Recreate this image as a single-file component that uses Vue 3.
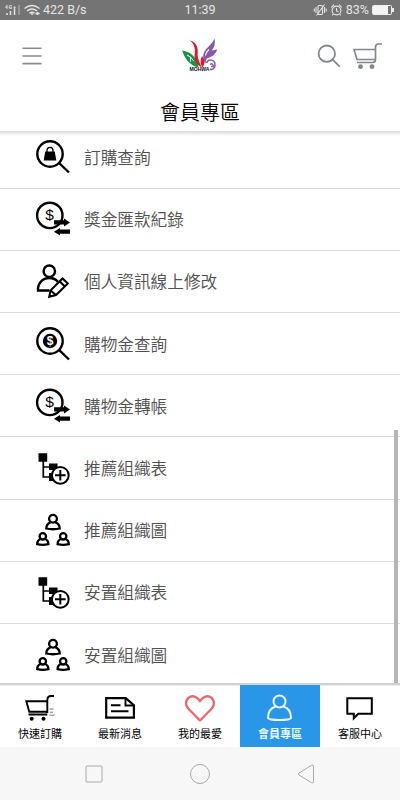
<template>
  <div class="screen">
    <div class="status-bar">
      <div class="status-left">
        <svg width="44" height="20" viewBox="0 0 44 20" fill="none" stroke="#e4e4e4">
          <path d="M7 15v-2M10.500 15v-4M14.500 15V8.500" stroke-width="1.500" />
          <path d="M19 15V5" stroke="#bdbdbd" stroke-width="1" />
          <text x="5" y="8.500" class="net" textLength="11">4G+</text>
          <path d="M24.500 8.500q7.500-6 15 0M27 11q5-4 10 0M29.500 13.300q2.500-2 5 0" stroke-width="1.500" />
          <circle cx="32" cy="14" r="1" fill="#e4e4e4" stroke="none" />
          <path d="M35.500 13.500h4M37.500 12v3" stroke-width="1.600" />
        </svg>
        <span class="speed">422 B/s</span>
      </div>
      <span>11:39</span>
      <div class="status-right">
        <svg width="32" height="20" viewBox="0 0 32 20" fill="none" stroke="#e4e4e4" stroke-width="1.100">
          <rect x="5" y="5.500" width="4.500" height="9" rx="1" />
          <path d="M3 7v6M1.300 8.500v3M11.500 7v6M13.200 8.500v3M3.500 15.500l8-11" />
          <circle cx="23.500" cy="10.500" r="4.400" />
          <path d="M23.500 8v3l2 .8M18.300 7.300l2.800-2.600M28.700 7.300l-2.800-2.600M20.300 14l-1 1.400M26.700 14l1 1.400" />
        </svg>
        <span class="percent">83%</span>
        <svg width="23" height="20" viewBox="0 0 23 20">
          <rect x=".5" y="5.500" width="19" height="9" rx="1" fill="none" stroke="#eee" />
          <path d="M1 6h15v8H1z" fill="#f4f4f4" />
          <path d="M20 8h2v4h-2z" fill="#eee" />
        </svg>
      </div>
    </div>

    <header class="top-bar">
      <svg width="20" height="20" viewBox="0 0 20 20" stroke="#858a8f" stroke-width="1.600">
        <path d="M.5 2.300h19M.5 10h19M.5 17.600h19" />
      </svg>
      <svg class="logo" width="40" height="38" viewBox="0 0 40 38">
        <path d="M2.200 13.400C9 14.500 16.500 18 18.600 30.500 9 28 4.500 21 2.200 13.400Z" fill="#169447" />
        <path d="M7 18q5 2 6.500 6M10.500 20v4.500" stroke="#fff" stroke-width="1" fill="none" />
        <path d="M9.800 3.200C17 5.500 18.200 11 17.700 16c-.4 5.500 2 9 4 14.500-5.500-3-8-7-6.900-14C15.500 10.500 13.500 6 9.800 3.200Z" fill="#d51d2b" />
        <path d="M22 19c3.500 4 3 8 .3 11.500-2.300-4-2.300-7.500-.3-11.500Z" fill="#d51d2b" />
        <path d="M34.600 1.500c.8 5.500-.2 9-3 12l5.700-1c-2.300 5.500-5.700 7.500-9.300 8.500-2 .7-2.500 3-2.300 6-3.200-5-3.300-10-.5-13.500 2.200-3.500 6.500-6 9.400-12Z" fill="#8658a5" />
        <path d="M29 12.500q-3 2.500-3.500 6" fill="none" stroke="#fff" stroke-width="1.200" />
        <path d="M26.500 26c2-4.500 8-3.500 8.500 1 .5 4-2.500 6.500-5 5M30 27.500q2-1.500 3 .5t-2 1.500" fill="none" stroke="#8658a5" stroke-width="1.500" />
        <text x="9.500" y="34" class="logo-name" textLength="20" lengthAdjust="spacingAndGlyphs">MOHWA</text>
      </svg>
      <div class="actions">
        <svg width="24" height="24" viewBox="0 0 24 24" fill="none" stroke="#7f898c" stroke-width="1.800">
          <circle cx="9.800" cy="9.700" r="8.200" /><path d="m15.700 15.700 7 7" />
        </svg>
        <svg width="30" height="28" viewBox="0 0 30 28" fill="none" stroke="#7f898c" stroke-width="1.700">
          <path d="M29 2h-3.500q-3 0-3 3v12.500q0 3-3 3H4M22.500 7.500H1l3 10h18.500" />
          <circle cx="7.500" cy="24.700" r="2.400" fill="#7f898c" stroke="none" />
          <circle cx="19" cy="24.700" r="2.400" fill="#7f898c" stroke="none" />
        </svg>
      </div>
    </header>
    <h1 class="page-title">會員專區</h1>

    <main class="list">
      <a v-for="item in items" :key="item.label" class="row">
        <svg width="38" height="38" viewBox="0 0 38 38" fill="none" stroke="#000" stroke-width="2.400">
          <g v-if="item.icon === 'order' || item.icon === 'query'">
            <circle cx="16" cy="16" r="12.700" />
            <path d="m25.200 25.200 9.800 9.300" />
            <template v-if="item.icon === 'order'">
              <path d="M11.200 13.500h9.600l1.500 9H9.700z" fill="#000" stroke="none" />
              <path d="M13 14.500v-2q0-3.200 3-3.200t3 3.200v2" stroke-width="1.300" />
            </template>
            <template v-else>
              <circle cx="16" cy="16" r="7.200" fill="#000" stroke="none" />
              <text x="16" y="20.200" class="dollar small">$</text>
            </template>
          </g>
          <g v-else-if="item.icon === 'transfer'">
            <circle cx="15.800" cy="15.400" r="12.700" />
            <text x="15.500" y="20.200" class="dollar">$</text>
            <path d="M20 20.300h10v-1.700l6 3.900-6 3.900v-1.800H20zM36 29.600H26v-1.700l-6 3.800 6 3.900v-1.800h10z" fill="#000" stroke="none" />
          </g>
          <g v-else-if="item.icon === 'edit'">
            <circle cx="15.300" cy="9.200" r="5.700" />
            <path d="M15.500 28.500H4c-.5-7 4.500-12.500 11.300-12.500 4 0 6.800 1.500 8.700 4" />
            <path d="m16.500 28.500 12-12 5.300 5L22 33l-6.800 1.800zM16.500 28.500 22 33M25.500 19.300l5.200 5" stroke-width="2" />
          </g>
          <g v-else-if="item.icon === 'table'">
            <path d="M4.500 4.200h8.700v8.600H4.500zM15 14.500h8.500V21H15zM15 24h8v8h-8z" fill="#000" stroke="none" />
            <path d="M9.300 12v16h7M9.300 18h7" stroke-width="1.700" />
            <circle cx="26.300" cy="26.300" r="8.400" fill="#fff" stroke-width="2" />
            <path d="M21 26.300h10.600M26.300 21v10.600" stroke-width="2" />
          </g>
          <g v-else stroke-width="2.300">
            <circle cx="19" cy="7.700" r="3.900" />
            <path d="M16.500 11.300c-2.700 1-4.200 3.300-4.200 6.200q6.700 1.500 13.400 0c0-2.900-1.500-5.200-4.200-6.200" />
            <circle cx="8.800" cy="25.300" r="3.200" />
            <path d="M6.700 28c-2.300.8-3.500 2.600-3.500 5.200q5.600 1.500 11.200 0c0-2.600-1.200-4.400-3.500-5.200" />
            <circle cx="29.200" cy="25.300" r="3.200" />
            <path d="M27.100 28c-2.300.8-3.500 2.600-3.500 5.200q5.600 1.500 11.200 0c0-2.600-1.200-4.400-3.500-5.200" />
          </g>
        </svg>
        <span>{{ item.label }}</span>
      </a>
      <div class="scrollbar"></div>
    </main>

    <nav class="tabs">
      <a v-for="tab in tabs" :key="tab.label" class="tab" :class="{ active: tab.active }">
        <svg width="36" height="32" viewBox="0 0 36 32" fill="none" stroke="#000" stroke-width="2">
          <g v-if="tab.icon === 'cart'" stroke-width="1.900">
            <path d="M32 4h-3q-3.500 0-3.700 4v13M25 9.300H4.300l3 10.500H25M6.500 22.500h18.800" />
            <path d="M27.500 17h4M28 20.200h3M27.500 23.200h5" stroke-width="1" stroke="#777" />
            <circle cx="9.700" cy="26.700" r="2" fill="#000" stroke="none" />
            <circle cx="21.500" cy="26.700" r="2" fill="#000" stroke="none" />
          </g>
          <g v-else-if="tab.icon === 'news'" stroke-width="2.200">
            <path d="M4.200 6.200h19.500l8.200 7v12.500H4.200z" />
            <path d="M23.500 6.500v7h8M9 13.300h9.500M9 19.300h17.500" stroke-width="1.900" />
          </g>
          <path v-else-if="tab.icon === 'heart'" d="M18 28.500 6.200 16.500C3 13.200 3.500 8 6.500 5.700 10.500 2.700 15.500 4.500 18 9.300 20.500 4.500 25.500 2.700 29.500 5.700c3 2.300 3.500 7.500.3 10.800z" stroke="#e8686b" stroke-width="2.400" stroke-linejoin="round" />
          <g v-else-if="tab.icon === 'member'" stroke="#eaf7ff">
            <circle cx="17.500" cy="9.500" r="6" />
            <path d="M13.500 14.500C8.500 16 6 20 6 26q1 2 11.500 2T29 26c0-6-2.500-10-7.500-11.500" />
          </g>
          <path v-else d="M5.300 6.300h24.500v15.500H16.200l-4.400 4.500v-4.500H5.300z" />
        </svg>
        <span>{{ tab.label }}</span>
      </a>
    </nav>

    <div class="system-nav">
      <svg width="18" height="18" viewBox="0 0 18 18"><rect x="1" y="1" width="16" height="16" rx="1" /></svg>
      <svg width="22" height="22" viewBox="0 0 22 22"><circle cx="11" cy="11" r="9.500" /></svg>
      <svg width="18" height="20" viewBox="0 0 18 20"><path d="M2 9 14.500 1.300q2-1 2 1v15.400q0 2-2 1L2 11q-1.500-1 0-2z" /></svg>
    </div>
  </div>
</template>

<script setup>
const items = [
  { label: '訂購查詢', icon: 'order' },
  { label: '獎金匯款紀錄', icon: 'transfer' },
  { label: '個人資訊線上修改', icon: 'edit' },
  { label: '購物金查詢', icon: 'query' },
  { label: '購物金轉帳', icon: 'transfer' },
  { label: '推薦組織表', icon: 'table' },
  { label: '推薦組織圖', icon: 'people' },
  { label: '安置組織表', icon: 'table' },
  { label: '安置組織圖', icon: 'people' },
]

const tabs = [
  { label: '快速訂購', icon: 'cart' },
  { label: '最新消息', icon: 'news' },
  { label: '我的最愛', icon: 'heart' },
  { label: '會員專區', icon: 'member', active: true },
  { label: '客服中心', icon: 'chat' },
]
</script>

<style>
body {
  margin: 0;
}
</style>

<style scoped>
.screen {
  display: flex;
  flex-direction: column;
  width: 400px;
  height: 800px;
  overflow: hidden;
  background: #fff;
  font-family: 'Noto Sans CJK TC', sans-serif;
}

svg {
  display: block;
  flex: none;
}

.status-bar {
  display: grid;
  grid-template-columns: 1fr auto 1fr;
  align-items: center;
  height: 20px;
  background: #747474;
  color: #e6e6e6;
  font: 12.5px/20px Roboto, sans-serif;
}

.status-left,
.status-right {
  display: flex;
  align-items: center;
}

.status-right {
  justify-content: flex-end;
  padding-right: 5px;
}

.speed {
  margin-left: -1px;
}

.percent {
  margin: 0 3px 0 1px;
}

.net {
  font: bold 5px Roboto, sans-serif;
  fill: #e4e4e4;
  stroke: none;
}

.top-bar {
  display: grid;
  grid-template-columns: 1fr auto 1fr;
  align-items: center;
  height: 72px;
  padding: 0 17px 0 22px;
  box-sizing: border-box;
}

.logo {
  margin-left: -5px;
}

.logo-name {
  font: bold 4.5px 'Liberation Sans', sans-serif;
  fill: #111;
}

.actions {
  display: flex;
  justify-content: flex-end;
  align-items: center;
  gap: 12px;
}

.page-title {
  height: 39px;
  margin: 0;
  font-size: 20px;
  font-weight: 350;
  line-height: 39px;
  text-align: center;
  color: #000;
}

.list {
  position: relative;
  display: flex;
  flex-direction: column;
  justify-content: flex-end;
  height: 552px;
  padding-top: 4px;
  box-sizing: border-box;
  overflow: hidden;
  background: linear-gradient(#dcdcdc, #e6e6e6 2px, #fff 5px);
}

.row {
  display: flex;
  flex: none;
  align-items: center;
  gap: 12px;
  height: 62.2px;
  padding-left: 34px;
  box-sizing: border-box;
  border-bottom: 1px solid #dcdcdc;
  color: #505050;
  font-size: 16.67px;
  font-weight: 350;
}

.row:last-of-type {
  margin-bottom: -3.2px;
}

/* first row is scrolled partly under the title */
.row:first-of-type {
  margin-top: -20px;
}

.dollar {
  font: 15.5px 'Liberation Sans', sans-serif;
  fill: #000;
  stroke: none;
  text-anchor: middle;
}

.dollar.small {
  font-size: 12px;
  font-weight: bold;
  fill: #fff;
}

.scrollbar {
  position: absolute;
  right: 2px;
  bottom: 0;
  width: 4px;
  height: 253px;
  background: #b5b5b5;
}

.tabs {
  display: flex;
  height: 64px;
  padding-top: 2px;
  box-sizing: border-box;
  background: linear-gradient(#cfcfcf, #d6d6d6 2px, #fff 3px);
}

.tab {
  display: flex;
  flex: 1;
  flex-direction: column;
  align-items: center;
  padding-top: 7px;
  color: #000;
  font-size: 11px;
  font-weight: 400;
  line-height: 16px;
}

.tab svg {
  margin-bottom: 1px;
}

.active {
  background: #2a96e8;
  color: #eaf7ff;
  font-weight: 700;
}

.system-nav {
  display: grid;
  grid-template-columns: 106px 106px 106px;
  align-items: center;
  justify-content: center;
  justify-items: center;
  height: 53px;
  background: #f7f7f7;
  fill: none;
  stroke: #aaa;
}
</style>
